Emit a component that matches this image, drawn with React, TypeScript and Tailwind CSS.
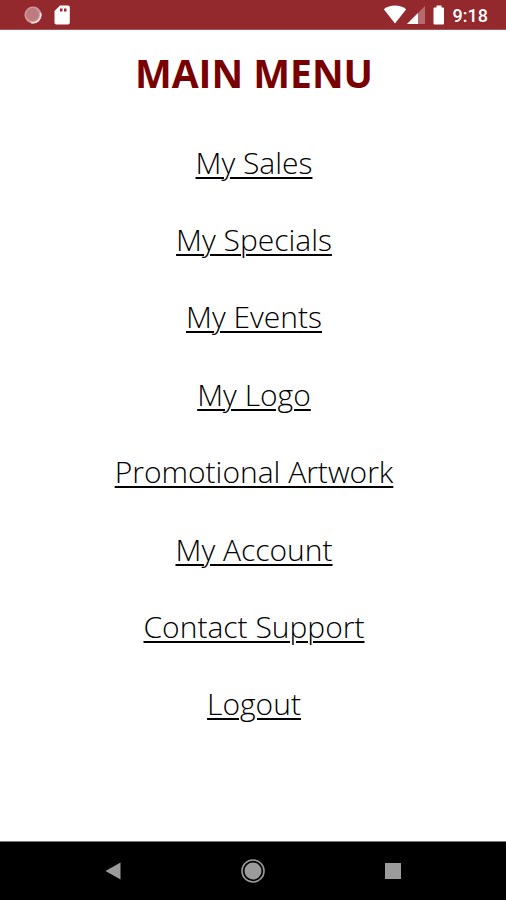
import React, { FC } from "react";

type MenuItem = {
    label: string;
    href: string;
};

const menuItems: MenuItem[] = [
    { label: "My Sales", href: "#sales" },
    { label: "My Specials", href: "#specials" },
    { label: "My Events", href: "#events" },
    { label: "My Logo", href: "#logo" },
    { label: "Promotional Artwork", href: "#artwork" },
    { label: "My Account", href: "#account" },
    { label: "Contact Support", href: "#support" },
    { label: "Logout", href: "#logout" },
];

const StatusBar: FC = () => {
    return (
        <header className="flex h-[30px] items-center justify-between border-b border-[#a8575b] bg-[#93282d] pl-6 pr-[18px] text-white">
            <div className="flex items-center gap-3">
                <svg className="h-[18px] w-[18px]" viewBox="0 0 18 18">
                    <circle cx="9" cy="9" r="8.500" fill="#cf9a9d" />
                    <circle cx="8.500" cy="8.500" r="6.500" fill="#bd7b7f" />
                    <path
                        d="M16.4 7A7.6 7.6 0 0 1 7 16.4"
                        fill="none"
                        stroke="#f6e6e6"
                        strokeWidth="1.6"
                    />
                </svg>
                <svg className="h-5 w-4" viewBox="0 0 16 20">
                    <path
                        d="M6 .5h8A1.8 1.8 0 0 1 15.8 2.3v15.4a1.8 1.8 0 0 1-1.8 1.8H2.3a1.8 1.8 0 0 1-1.8-1.8V6z"
                        fill="#fff"
                    />
                    <path d="M6 3.500h2.500v3H6zM10 3.500h2.500v3H10z" fill="#93282d" />
                </svg>
            </div>
            <div className="flex items-center">
                <svg className="h-[19px] w-6" viewBox="0 0 24 19">
                    <path d="M12 18.500L.8 4.300C4 1.900 7.800.6 12 .6s8 1.300 11.200 3.700z" fill="#fff" />
                </svg>
                <svg className="h-[18px] w-[18px]" viewBox="0 0 18 18">
                    <path d="M18 0v18H0z" fill="#b56a6e" />
                    <path d="M11 7v11H0z" fill="#fff" />
                </svg>
                <svg className="ml-2 h-5 w-3" viewBox="0 0 12 20">
                    <path
                        d="M3.500.5h5v2H10a1 1 0 0 1 1 1v15a1 1 0 0 1-1 1H1.500a1 1 0 0 1-1-1v-15a1 1 0 0 1 1-1h2z"
                        fill="#fff"
                    />
                </svg>
                <span className="ml-2 pt-0.5 font-['Roboto',sans-serif] text-lg font-medium leading-5">
                    9:18
                </span>
            </div>
        </header>
    );
};

const NavigationBar: FC = () => {
    return (
        <footer className="flex h-[59px] items-center justify-around border-t border-[#777] bg-black px-[43px]">
            <button type="button" aria-label="Back" className="p-1">
                <svg className="h-6 w-6" viewBox="0 0 24 24">
                    <path d="M19.500 3.500v17L4.500 12z" fill="#9b9b9b" />
                </svg>
            </button>
            <button type="button" aria-label="Home" className="p-1">
                <svg className="h-6 w-6" viewBox="0 0 24 24">
                    <circle cx="12" cy="12" r="11" fill="none" stroke="#9b9b9b" strokeWidth="1.600" />
                    <circle cx="12" cy="12" r="8.500" fill="#9b9b9b" />
                </svg>
            </button>
            <button type="button" aria-label="Recent apps" className="p-1">
                <svg className="h-6 w-6" viewBox="0 0 24 24">
                    <path d="M4 4h16v16H4z" fill="#9b9b9b" />
                </svg>
            </button>
        </footer>
    );
};

const App: FC = () => {
    return (
        <div className="flex min-h-screen flex-col bg-white font-['Open_Sans',sans-serif]">
            <StatusBar />
            <main className="flex flex-1 flex-col pb-[98px] pl-0.5 text-center">
                <h1 className="pt-4 text-[39px] font-bold leading-[54px] text-[#790000]">
                    MAIN MENU
                </h1>
                <nav className="mt-6 flex flex-1 flex-col">
                    {menuItems.map((item) => (
                        <div key={item.href} className="flex flex-1 items-center justify-center">
                            <a
                                href={item.href}
                                className="text-[30px] font-light leading-10 text-black underline decoration-2 underline-offset-[3px]"
                            >
                                {item.label}
                            </a>
                        </div>
                    ))}
                </nav>
            </main>
            <NavigationBar />
        </div>
    );
};

export default App;
